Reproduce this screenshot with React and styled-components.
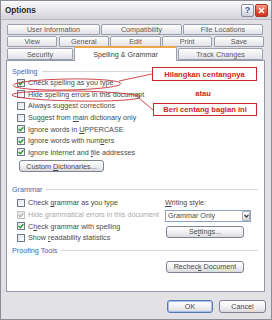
import React from 'react';
import styled, { createGlobalStyle } from 'styled-components';

const GlobalStyle = createGlobalStyle`
  html, body { margin: 0; padding: 0; background: #ffffff; }
  body { font-family: "Liberation Sans", Arial, sans-serif; }
  * { box-sizing: border-box; }
`;

const Dialog = styled.div`
  position: relative;
  width: 272px;
  height: 320px;
  border: 1px solid #8c8c94;
  background: #e2e1e6;
  display: flex;
  flex-direction: column;
  font-size: 7.2px;
  color: #4a4a4a;
  overflow: hidden;
`;

const TitleBar = styled.div`
  height: 19px;
  display: flex;
  align-items: center;
  padding: 0 3px 0 4px;
  background: linear-gradient(#fbfbfc 0%, #e9e9ee 45%, #d3d3da 100%);
  border-bottom: 1px solid #b8b8c0;
`;

const Title = styled.div`
  flex: 1;
  font-size: 8.2px;
  font-weight: bold;
  color: #2a2a2a;
`;

const CaptionButton = styled.div`
  width: 13px;
  height: 13px;
  margin-left: 1px;
  border-radius: 2px;
  display: flex;
  align-items: center;
  justify-content: center;
  border: 1px solid ${(p) => (p.$close ? '#a23a2c' : '#8a8ea0')};
  background: ${(p) =>
    p.$close
      ? 'linear-gradient(#f49a86, #e0523a 55%, #c8301c)'
      : 'linear-gradient(#ffffff, #e4e4ea 60%, #cfd0d8)'};
  color: #3c58a0;
  font-size: 9px;
  font-weight: bold;
`;

const Tabs = styled.div`
  margin-top: 4px;
  padding: 0 7px 0 6px;
  display: flex;
  flex-direction: column;
  gap: 1px;
`;

const TabRow = styled.div`
  height: ${(p) => (p.$last ? 12 : 11)}px;
  display: flex;
  align-items: flex-end;
  gap: ${(p) => p.$gap || 1}px;
`;

const Tab = styled.div`
  position: relative;
  flex: ${(p) => (p.$w ? `0 0 ${p.$w}px` : '1')};
  height: ${(p) => (p.$active ? 15 : p.$h || 11)}px;
  margin-bottom: ${(p) => (p.$active ? -1 : 0)}px;
  z-index: ${(p) => (p.$active ? 2 : 1)};
  display: flex;
  align-items: center;
  justify-content: center;
  border: 1px solid #9aa0ac;
  border-bottom: ${(p) => (p.$active ? 'none' : '1px solid #9aa0ac')};
  border-top: ${(p) => (p.$active ? '2px solid #eda64a' : '1px solid #9aa0ac')};
  border-radius: 2px 2px 0 0;
  background: ${(p) =>
    p.$active ? '#ffffff' : 'linear-gradient(#ffffff, #f1f1f3 50%, #e2e2e8)'};
  color: ${(p) => (p.$active ? '#444' : '#5a5a5a')};
  white-space: nowrap;
`;

const Panel = styled.div`
  height: 232px;
  margin: 0 6px 0 5px;
  border: 1px solid #959aa6;
  background: #ffffff;
  padding: 6px 6px 0 5px;
  display: flex;
  flex-direction: column;
`;

const GroupHeader = styled.div`
  height: 9px;
  display: flex;
  align-items: center;
  gap: 4px;
  color: #3a66b8;
  margin-top: ${(p) => p.$mt || 0}px;
  &::after {
    content: '';
    flex: 1;
    height: 1px;
    background: #d4d4da;
  }
`;

const Rows = styled.div`
  margin-top: ${(p) => p.$mt || 1}px;
  padding-left: 5px;
  display: flex;
  flex-direction: column;
`;

const Row = styled.div`
  height: 11.6px;
  display: flex;
  align-items: center;
  gap: 3px;
  color: ${(p) => (p.$disabled ? '#ababab' : '#4a4a4a')};
  white-space: nowrap;
`;

const Box = styled.span`
  width: 8px;
  height: 8px;
  flex: 0 0 8px;
  border: 1px solid ${(p) => (p.$disabled ? '#c4c4c8' : '#6e7a8c')};
  background: linear-gradient(135deg, #e2e2e6, #ffffff);
  display: flex;
  align-items: center;
  justify-content: center;
`;

const Button = styled.div`
  width: ${(p) => p.$w}px;
  height: ${(p) => p.$h || 12}px;
  margin-left: ${(p) => p.$ml || 0}px;
  margin-top: ${(p) => p.$mt || 0}px;
  border: 1px solid ${(p) => (p.$default ? '#5a78b0' : '#7c8494')};
  border-radius: 3px;
  background: linear-gradient(#ffffff, #f2f2f4 50%, #dadade);
  box-shadow: ${(p) => (p.$default ? 'inset 0 0 0 1px #a8c0ec' : 'none')};
  display: flex;
  align-items: center;
  justify-content: center;
  color: #4a4a4a;
  white-space: nowrap;
`;

const GrammarBody = styled.div`
  margin-top: 2.7px;
  padding-left: 5px;
  display: grid;
  grid-template-columns: 148px 86px;
`;

const SideColumn = styled.div`
  display: flex;
  flex-direction: column;
`;

const SideLabel = styled.div`
  height: 11.6px;
  display: flex;
  align-items: center;
`;

const Select = styled.div`
  margin-top: 1px;
  width: 86px;
  height: 12px;
  border: 1px solid #8ea2bc;
  background: #ffffff;
  display: flex;
  align-items: center;
  padding-left: 2px;
  justify-content: space-between;
`;

const SelectArrow = styled.span`
  width: 8px;
  height: 10px;
  border: 1px solid #a8b0c0;
  border-radius: 1px;
  background: linear-gradient(#ffffff, #d8d8de);
  display: flex;
  align-items: center;
  justify-content: center;
`;

const Footer = styled.div`
  display: flex;
  justify-content: flex-end;
  gap: 6px;
  padding: 8px 5px 0 0;
`;

const Overlay = styled.svg`
  position: absolute;
  left: -1px;
  top: -1px;
  pointer-events: none;
  z-index: 5;
`;

const Note = styled.div`
  position: absolute;
  left: ${(p) => p.$x - 1}px;
  top: ${(p) => p.$y - 1}px;
  width: ${(p) => p.$w}px;
  height: ${(p) => p.$h}px;
  border: ${(p) => (p.$plain ? 'none' : '1px solid #c8282c')};
  background: ${(p) => (p.$plain ? 'transparent' : '#ffffff')};
  color: #d01e24;
  font-weight: bold;
  font-size: 7.6px;
  display: flex;
  align-items: center;
  justify-content: center;
  z-index: 6;
  white-space: nowrap;
`;

const Check = ({ on, disabled }) => (
  <Box $disabled={disabled}>
    {on && (
      <svg width="6" height="6" viewBox="0 0 6 6">
        <path
          d="M0.6 3 L2.3 4.7 L5.4 1.2"
          fill="none"
          stroke={disabled ? '#b4b4b4' : '#21a12a'}
          strokeWidth="1.4"
        />
      </svg>
    )}
  </Box>
);

const CheckRow = ({ on, disabled, children }) => (
  <Row $disabled={disabled}>
    <Check on={on} disabled={disabled} />
    <span>{children}</span>
  </Row>
);

export default function App() {
  return (
    <>
      <GlobalStyle />
      <Dialog>
        <TitleBar>
          <Title>Options</Title>
          <CaptionButton>?</CaptionButton>
          <CaptionButton $close>
            <svg width="7" height="7" viewBox="0 0 7 7">
              <path d="M1 1 L6 6 M6 1 L1 6" stroke="#fff" strokeWidth="1.6" />
            </svg>
          </CaptionButton>
        </TitleBar>

        <Tabs>
          <TabRow>
            <Tab $w={93}>User Information</Tab>
            <Tab $w={81}>Compatibility</Tab>
            <Tab $w={80}>File Locations</Tab>
          </TabRow>
          <TabRow $gap={1.5}>
            <Tab>View</Tab>
            <Tab>General</Tab>
            <Tab>Edit</Tab>
            <Tab>Print</Tab>
            <Tab>Save</Tab>
          </TabRow>
          <TabRow $last>
            <Tab $w={66} $h={12}>Security</Tab>
            <Tab $w={103} $active>Spelling &amp; Grammar</Tab>
            <Tab $w={85} $h={12}>Track Changes</Tab>
          </TabRow>
        </Tabs>

        <Panel>
          <GroupHeader>Spelling</GroupHeader>
          <Rows>
            <CheckRow on>Check spelling as you type</CheckRow>
            <CheckRow>Hide spelling errors in this document</CheckRow>
            <CheckRow>Always suggest corrections</CheckRow>
            <CheckRow>Suggest from <u>m</u>ain dictionary only</CheckRow>
            <CheckRow on>Ignore words in <u>U</u>PPERCASE</CheckRow>
            <CheckRow on>Ignore words with num<u>b</u>ers</CheckRow>
            <CheckRow on>Ignore Internet and <u>f</u>ile addresses</CheckRow>
          </Rows>
          <Button $w={85} $ml={7} $mt={2}>
            <span>Custom <u>D</u>ictionaries...</span>
          </Button>

          <GroupHeader $mt={13.3}>Grammar</GroupHeader>
          <GrammarBody>
            <div>
              <CheckRow>Check <u>g</u>rammar as you type</CheckRow>
              <CheckRow on disabled>Hide grammatical errors in this document</CheckRow>
              <CheckRow on>C<u>h</u>eck grammar with spelling</CheckRow>
              <CheckRow>Show <u>r</u>eadability statistics</CheckRow>
            </div>
            <SideColumn>
              <SideLabel>
                <span><u>W</u>riting style:</span>
              </SideLabel>
              <Select>
                <span>Grammar Only</span>
                <SelectArrow>
                  <svg width="5" height="4" viewBox="0 0 5 4">
                    <path d="M0.5 0.8 L2.5 3 L4.5 0.8" fill="none" stroke="#333" strokeWidth="1.2" />
                  </svg>
                </SelectArrow>
              </Select>
              <Button $w={78} $ml={1} $mt={4}>
                <span>Se<u>t</u>tings...</span>
              </Button>
            </SideColumn>
          </GrammarBody>

          <GroupHeader $mt={2.9}>Proofing Tools</GroupHeader>
          <Button $w={78} $ml={154} $mt={5.5}>
            <span>Rechec<u>k</u> Document</span>
          </Button>
        </Panel>

        <Footer>
          <Button $w={46} $h={13} $default>OK</Button>
          <Button $w={47} $h={13}>Cancel</Button>
        </Footer>

        <Overlay width="272" height="320" viewBox="0 0 272 320">
          <ellipse cx="67" cy="84.5" rx="54" ry="5.5" fill="none" stroke="#c8343a" strokeWidth="0.9" transform="rotate(-1 67 84.5)" />
          <ellipse cx="76" cy="96" rx="64" ry="5" fill="none" stroke="#c8343a" strokeWidth="0.9" transform="rotate(1 76 96)" />
          <path d="M152 74 L119 81" stroke="#c8343a" strokeWidth="0.9" fill="none" />
          <path d="M153 110 L139 98" stroke="#c8343a" strokeWidth="0.9" fill="none" />
          <path d="M137 93.5 L140.5 96 L137 98.5" stroke="#555" strokeWidth="0.8" fill="none" />
        </Overlay>
        <Note $x={152} $y={67} $w={105} $h={14}>Hilangkan centangnya</Note>
        <Note $plain $x={188} $y={88} $w={30} $h={10}>atau</Note>
        <Note $x={153} $y={103} $w={104} $h={13}>Beri centang bagian ini</Note>
      </Dialog>
    </>
  );
}
